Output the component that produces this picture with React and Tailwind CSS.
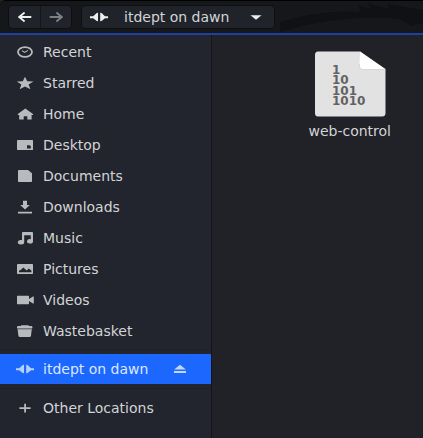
import React from "react";

function Icon({ children, className = "" }) {
  return (
    <svg viewBox="0 0 18 14" width="18" height="14" fill="currentColor" aria-hidden="true" className={`shrink-0 ${className}`}>
      {children}
    </svg>
  );
}

const Clock = () => (
  <Icon>
    <ellipse cx="9" cy="7" rx="7" ry="4.9" fill="none" stroke="currentColor" strokeWidth="1.8" />
    <path d="M6 5.6 8.6 7.4 12 5.4" fill="none" stroke="currentColor" strokeWidth="1.1" />
  </Icon>
);
const Star = () => (
  <Icon>
    <path d="M9 .8 11.2 5.2 17.4 5.4 12.6 8.5 14.4 13.2 9 10.4 3.6 13.2 5.4 8.5.8 5.4 6.8 5.2Z" />
  </Icon>
);
const House = () => (
  <Icon>
    <path d="M9.3 1.5 17 7.1V8H15.6V12.6H11.3V9.2H7.7V12.6H3.2V8H1.8V7.1Z" />
  </Icon>
);
const DesktopIcon = () => (
  <Icon>
    <path fillRule="evenodd" d="M1.8 2H16.4Q17 2 17 2.6V11.4Q17 12 16.4 12H1.8Q1 12 1 11.4V2.6Q1 2 1.8 2ZM11 7.3V10.5H14.8V8.2L13.8 7.3Z" />
  </Icon>
);
const DocumentIcon = () => (
  <Icon>
    <path d="M3 1H12L16 4.2V12.2Q16 13 15.2 13H3Q2 13 2 12.2V1.8Q2 1 3 1Z" />
  </Icon>
);
const DownloadIcon = () => (
  <Icon>
    <path d="M7 .7H11V5H13.8L9 9.6 4.2 5H7ZM2 11.8H16V13.4H2Z" />
  </Icon>
);
const MusicIcon = () => (
  <Icon>
    <path d="M6 1.8Q6 1 7 1H16Q17 1 17 1.8V10.2A3 2.2 0 1 1 14.8 8.2V4.2H8.2V11.2A3.2 2.2 0 1 1 6 9.1Z" />
  </Icon>
);
const PictureIcon = () => (
  <Icon>
    <path fillRule="evenodd" d="M1.8 2H16.4L17 2.6V11.4L16.4 12H1.8L1 11.4V2.6ZM3 10.2H15.4V8.4L12.7 6.6 10.8 8.5 7.2 5.6 5 7.8 3 8.8Z" />
  </Icon>
);
const VideoIcon = () => (
  <Icon>
    <path d="M1.6 2.8H12.4Q13 2.8 13 3.4V6L17 3.4H17.8V10.6H17L13 8V10.5Q13 11.2 12.4 11.2H1.6Q1 11.2 1 10.5V3.5Q1 2.8 1.6 2.8Z" />
  </Icon>
);
const TrashIcon = () => (
  <Icon>
    <path d="M5.3 1.3H12.4L13 2H15.4Q16.4 2 16.4 3V4.1H1V3Q1 2 2 2H4.7Z" />
    <path d="M1.2 4.1H16.2V5.2H1.2Z" opacity=".6" />
    <path d="M1.6 5.2H15.8L15 11.7Q14.8 13 13.4 13H4Q2.6 13 2.4 11.7Z" />
  </Icon>
);
const ConnectIcon = () => (
  <Icon>
    <path d="M8 2.7V11.3L6.8 11.1 3.2 8.2H0V6.2H3.2L6.8 3ZM10.2 2.7 11.6 3 15 6.2H18V8.2H15L11.6 11.1 10.2 11.3Z" />
  </Icon>
);
const PlusIcon = () => (
  <Icon>
    <path d="M8.2 2.8H10V6.3H14.6V7.9H10V11.4H8.2V7.9H3.4V6.3H8.2Z" />
  </Icon>
);

const places = [
  ["Recent", Clock],
  ["Starred", Star],
  ["Home", House],
  ["Desktop", DesktopIcon],
  ["Documents", DocumentIcon],
  ["Downloads", DownloadIcon],
  ["Music", MusicIcon],
  ["Pictures", PictureIcon],
  ["Videos", VideoIcon],
  ["Wastebasket", TrashIcon],
];

function Place({ label, Glyph }) {
  return (
    <a href="#" className="flex h-[31px] items-center gap-[9px] pl-4">
      <span className="flex text-[#b9babd]"><Glyph /></span>
      <span>{label}</span>
    </a>
  );
}

function Arrow({ flip }) {
  return (
    <svg viewBox="0 0 14 12" width="14" height="12" fill="none" stroke="currentColor" strokeWidth="1.8" aria-hidden="true">
      {flip ? <path d="M.7 6H12.6M7.4 1.5 12.8 6 7.4 10.5" /> : <path d="M13.3 6H1.4M6.6 1.5 1.2 6 6.6 10.5" />}
    </svg>
  );
}

export default function App() {
  return (
    <div className="flex min-h-screen flex-col bg-[#212128] font-['DejaVu_Sans','Noto_Sans',sans-serif] text-[14px] leading-5 text-[#d3d4d7]">
      <header className="relative flex h-[35px] items-center gap-[9px] rounded-tl-md border-t border-b-2 border-t-black border-b-[#1c41a0] bg-[#16171b] px-2">
        <svg viewBox="0 0 143 32" width="143" height="32" fill="#101114" aria-hidden="true" className="absolute top-0 right-0">
          <path d="M0 21Q40 8 82 11L143 10V22L131 25 120 18Q62 12 0 31ZM66 3 80 10 78 4 92 8 87 2 109 8 107 3 143 9V14H88Z" />
        </svg>
        <div className="relative flex h-6 overflow-hidden rounded border border-[#0e0f12] bg-[#20232a]">
          <button aria-label="Back" className="flex w-8 items-center justify-center border-r border-[#14161a] text-[#eeeeec]"><Arrow /></button>
          <button aria-label="Forward" className="flex w-[30px] items-center justify-center text-[#7e8084]"><Arrow flip /></button>
        </div>
        <button className="relative flex h-6 w-[194px] items-center rounded border border-[#0e0f12] bg-[#20232a] pr-3 pl-2">
          <span className="flex text-[#eeeeec]"><ConnectIcon /></span>
          <span className="ml-4 grow text-left">itdept on dawn</span>
          <svg viewBox="0 0 12 5" width="12" height="5" fill="#eeeeec" aria-hidden="true"><path d="M.5.2H11.5L6 4.8Z" /></svg>
        </button>
      </header>
      <div className="flex grow">
        <nav aria-label="Places" className="w-1/2 border-r border-[#141519] bg-[#22252d] pt-px">
          {places.map(([label, Glyph]) => <Place key={label} label={label} Glyph={Glyph} />)}
          <div className="mt-[3px] border-y border-[#1d2026] py-1">
            <div className="flex h-[30px] items-center bg-[#1c68ff] text-[#dbe7ff]">
              <a href="#" aria-current="page" className="flex grow items-center gap-[9px] pl-4">
                <span className="flex text-[#b5cfff]"><ConnectIcon /></span>
                <span>itdept on dawn</span>
              </a>
              <button aria-label="Eject" className="mr-6 text-[#c3d7ff]">
                <svg viewBox="0 0 14 10" width="14" height="10" fill="currentColor" aria-hidden="true"><path d="M7 .8 12.8 5.5H1.2ZM1 7H13V9H1Z" /></svg>
              </button>
            </div>
          </div>
          <div className="pt-[3px]"><Place label="Other Locations" Glyph={PlusIcon} /></div>
        </nav>
        <main className="flex grow justify-end p-4 pr-8">
          <figure className="flex flex-col items-center">
            <svg viewBox="0 0 72 66" width="72" height="66" role="img" aria-label="Binary file">
              <path d="M4 .5H46L71.5 18V62Q71.5 65.5 68 65.5H4Q1 65.5 1 62V4Q1 .5 4 .5Z" fill="#e2e2e2" />
              <path d="M46 .5 71.5 18.5H50Q45.5 18.5 45.5 15Z" fill="#fff" />
              <path d="M45.5 13V15Q45.5 18.5 50 18.5H71" fill="none" stroke="#d0d0d0" strokeWidth=".8" />
              <g fill="#626262" fontFamily="DejaVu Sans" fontWeight="bold" fontSize="12">
                <text x="18" y="23">1</text>
                <text x="18" y="33">10</text>
                <text x="18" y="44">101</text>
                <text x="18" y="54">1010</text>
              </g>
            </svg>
            <figcaption className="mt-1">web-control</figcaption>
          </figure>
        </main>
      </div>
    </div>
  );
}
